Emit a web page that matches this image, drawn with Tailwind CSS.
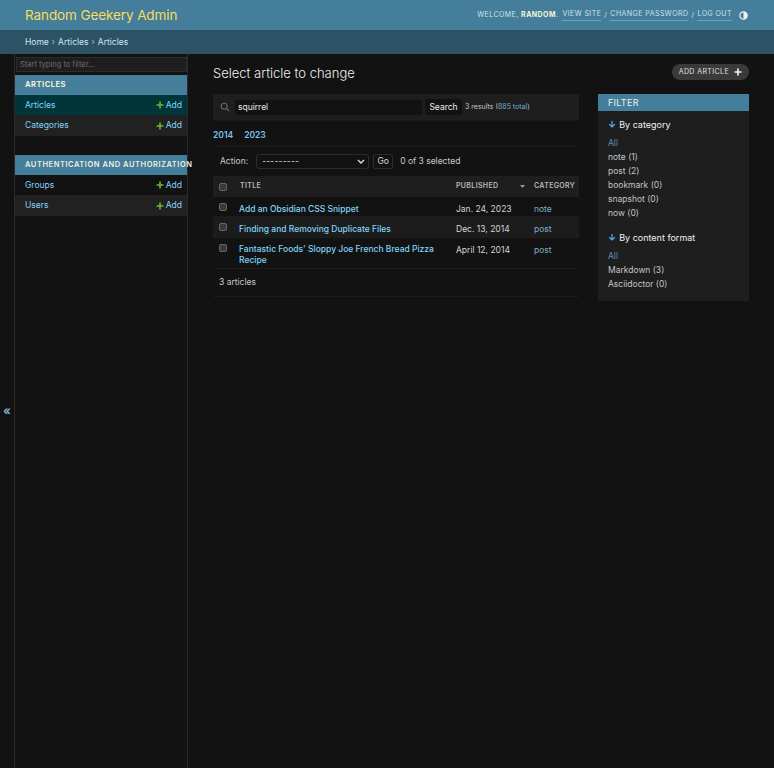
<!DOCTYPE html>
<html lang="en">
<head>
    <meta charset="UTF-8">
    <meta name="viewport" content="width=device-width, initial-scale=1.0">
    <title>Select article to change</title>
    <script src="https://cdn.jsdelivr.net/npm/@tailwindcss/browser@4"></script>
</head>
<body class="bg-[#121212] text-[#dcdcdc] font-['Inter',sans-serif] text-[8.5px] h-[768px] overflow-hidden">

    <!-- Header -->
    <div class="h-[30px] bg-[#447e9b] flex items-center justify-between pl-[25px] pr-[26px]">
        <div class="text-[13.5px] text-[#f5dd5d] tracking-[-0.1px]">Random Geekery Admin</div>
        <div class="flex items-center text-[7px] tracking-[0.45px] text-[#cfe3ea] uppercase">
            <span>Welcome, <b class="text-[#f5f5d5]">random</b>.</span>
            <span class="ml-[4px] border-b border-[#9fc0cf]/50">View site</span>
            <span class="mx-[3px]">/</span>
            <span class="border-b border-[#9fc0cf]/50">Change password</span>
            <span class="mx-[3px]">/</span>
            <span class="border-b border-[#9fc0cf]/50">Log out</span>
            <svg class="ml-[7px]" width="9" height="9" viewBox="0 0 9 9"><circle cx="4.5" cy="4.5" r="3.7" fill="none" stroke="#eee" stroke-width="1.2"/><path d="M4.5 .8a3.7 3.7 0 0 1 0 7.4z" fill="#eee"/></svg>
        </div>
    </div>

    <!-- Breadcrumbs -->
    <div class="h-[24px] bg-[#2c5266] flex items-center pl-[25px] text-[8.5px] text-[#d5e3ea]">
        Home <span class="mx-[3px] text-[#a9c3cf]">›</span> Articles <span class="mx-[3px] text-[#a9c3cf]">›</span> Articles
    </div>

    <div class="flex h-[714px]">
        <!-- Sidebar toggle -->
        <div class="w-[15px] shrink-0 border-r border-[#2a2a2a] flex items-center justify-center pb-[0px]">
            <span class="text-[#79aec8] text-[12px] font-bold leading-none">«</span>
        </div>

        <!-- Sidebar -->
        <div class="w-[173px] shrink-0 border-r border-[#2a2a2a] pt-[3px]">
            <div class="h-[15px] ml-[1px] bg-[#1e1e1e] border border-[#2c2c2c] flex items-center pl-[3px] text-[7.5px] text-[#6f6f6f]">Start typing to filter...</div>

            <div class="mt-[3px] h-[20px] bg-[#447e9b] flex items-center pl-[10px] text-[7.5px] font-bold tracking-[0.5px] text-[#f0f0d8]">ARTICLES</div>
            <div class="h-[20px] bg-[#00363a] flex items-center justify-between pl-[10px] pr-[5px]">
                <span class="text-[#81d4fa]">Articles</span>
                <span class="flex items-center gap-[2px] text-[#81d4fa]"><svg width="8" height="8" viewBox="0 0 8 8"><path d="M4 .5v7M.5 4h7" stroke="#6cb82c" stroke-width="1.6"/></svg>Add</span>
            </div>
            <div class="h-[21px] bg-[#212121] flex items-center justify-between pl-[10px] pr-[5px]">
                <span class="text-[#81d4fa]">Categories</span>
                <span class="flex items-center gap-[2px] text-[#81d4fa]"><svg width="8" height="8" viewBox="0 0 8 8"><path d="M4 .5v7M.5 4h7" stroke="#6cb82c" stroke-width="1.6"/></svg>Add</span>
            </div>

            <div class="mt-[19px] h-[20px] bg-[#447e9b] flex items-center pl-[10px] text-[7.5px] font-semibold tracking-[0.55px] text-[#f0f0e0] whitespace-nowrap">AUTHENTICATION AND AUTHORIZATION</div>
            <div class="h-[20px] bg-[#121212] flex items-center justify-between pl-[10px] pr-[5px]">
                <span class="text-[#81d4fa]">Groups</span>
                <span class="flex items-center gap-[2px] text-[#81d4fa]"><svg width="8" height="8" viewBox="0 0 8 8"><path d="M4 .5v7M.5 4h7" stroke="#6cb82c" stroke-width="1.6"/></svg>Add</span>
            </div>
            <div class="h-[21px] bg-[#212121] flex items-center justify-between pl-[10px] pr-[5px]">
                <span class="text-[#81d4fa]">Users</span>
                <span class="flex items-center gap-[2px] text-[#81d4fa]"><svg width="8" height="8" viewBox="0 0 8 8"><path d="M4 .5v7M.5 4h7" stroke="#6cb82c" stroke-width="1.6"/></svg>Add</span>
            </div>
        </div>

        <!-- Content -->
        <div class="flex-1 min-w-0 pl-[25px] pr-[25px] pt-[10px]">
            <div class="flex items-center justify-between h-[20px] mb-[10px]">
                <h1 class="text-[13px] text-[#f0f0f0] font-light">Select article to change</h1>
                <div class="h-[16px] -mt-[4px] rounded-full bg-[#3a3a3a] flex items-center px-[7px] gap-[5px] text-[7px] tracking-[0.4px] text-[#e0e0e0]">
                    ADD ARTICLE
                    <svg width="8" height="8" viewBox="0 0 8 8"><path d="M4 .5v7M.5 4h7" stroke="#eee" stroke-width="1.7"/></svg>
                </div>
            </div>

            <div class="flex gap-[19px] items-start">
                <!-- List -->
                <div class="w-[366px] shrink-0">
                    <div class="h-[27px] bg-[#1e1e1e] flex items-center pl-[7px] border-b border-[#181818]">
                        <svg width="10" height="10" viewBox="0 0 10 10" fill="none" stroke="#666" stroke-width="1.1"><circle cx="4.2" cy="4.2" r="3"/><path d="M6.5 6.5L9 9"/></svg>
                        <div class="ml-[5px] w-[187px] h-[15px] bg-[#121212] rounded-[2px] flex items-center pl-[3px] text-[#e8e8e8]">squirrel</div>
                        <div class="ml-[3px] h-[16px] w-[37px] bg-[#121212] rounded-[2px] flex items-center justify-center text-[#eeeeee]">Search</div>
                        <div class="ml-[3px] text-[7px] text-[#c8c8c8] whitespace-nowrap">3 results (<span class="text-[#79aec8]">885 total</span>)</div>
                    </div>

                    <div class="h-[23px] flex items-center gap-[11px] text-[#79c4e8] font-semibold border-b border-[#1c1c1c] mt-[3px]">
                        <span>2014</span><span>2023</span>
                    </div>

                    <div class="h-[29px] flex items-center pl-[7px]">
                        <span class="text-[#c8c8c8]">Action:</span>
                        <div class="ml-[8px] w-[113px] h-[15px] border border-[#2c2c2c] rounded-[3px] flex items-center justify-between pl-[5px] pr-[3px] text-[#dddddd]">
                            <span class="tracking-[0.2px]">---------</span>
                            <svg width="8" height="6" viewBox="0 0 8 6" fill="none" stroke="#ddd" stroke-width="1.4"><path d="M1 1l3 3 3-3"/></svg>
                        </div>
                        <div class="ml-[4px] w-[20px] h-[15px] border border-[#2c2c2c] rounded-[2px] flex items-center justify-center text-[#dddddd]">Go</div>
                        <span class="ml-[7px] text-[#c8c8c8]">0 of 3 selected</span>
                    </div>

                    <!-- Table -->
                    <div class="h-[21px] bg-[#1e1e1e] flex items-center text-[7px] tracking-[0.35px] text-[#b8b8b8]">
                        <span class="w-[6px]"></span>
                        <span class="w-[8px] h-[8px] rounded-[2px] bg-[#3a3a3a] border border-[#666]"></span>
                        <span class="ml-[13px] w-[216px] font-semibold">TITLE</span>
                        <span class="w-[64px] font-semibold">PUBLISHED</span>
                        <svg width="5" height="3" viewBox="0 0 5 3" class="mr-[9px]"><path d="M0 0h5L2.5 3z" fill="#999"/></svg>
                        <span class="font-semibold">CATEGORY</span>
                    </div>
                    <div class="h-[20px] flex items-start pt-[6px] border-b border-[#1c1c1c]">
                        <span class="w-[6px]"></span>
                        <span class="w-[8px] h-[8px] rounded-[2px] bg-[#3a3a3a] border border-[#666]"></span>
                        <span class="ml-[12px] w-[217px] text-[#81d4fa] font-medium">Add an Obsidian CSS Snippet</span>
                        <span class="w-[78px] text-[#d5d5d5]">Jan. 24, 2023</span>
                        <span class="text-[#79aec8]">note</span>
                    </div>
                    <div class="h-[21px] bg-[#1c1c1c] flex items-start pt-[6px]">
                        <span class="w-[6px]"></span>
                        <span class="w-[8px] h-[8px] rounded-[2px] bg-[#3a3a3a] border border-[#666]"></span>
                        <span class="ml-[12px] w-[217px] text-[#81d4fa] font-medium">Finding and Removing Duplicate Files</span>
                        <span class="w-[78px] text-[#d5d5d5]">Dec. 13, 2014</span>
                        <span class="text-[#79aec8]">post</span>
                    </div>
                    <div class="h-[31px] flex items-start pt-[6px] border-b border-[#1c1c1c]">
                        <span class="w-[6px]"></span>
                        <span class="w-[8px] h-[8px] rounded-[2px] bg-[#3a3a3a] border border-[#666]"></span>
                        <span class="ml-[12px] w-[217px] pr-[20px] text-[#81d4fa] font-medium leading-[10.5px]">Fantastic Foods' Sloppy Joe French Bread Pizza Recipe</span>
                        <span class="w-[78px] text-[#d5d5d5]">April 12, 2014</span>
                        <span class="text-[#79aec8]">post</span>
                    </div>
                    <div class="h-[28px] flex items-center pl-[6px] text-[#c8c8c8] border-b border-[#1c1c1c]">3 articles</div>
                </div>

                <!-- Filter -->
                <div class="w-[151px] shrink-0 h-[207px] bg-[#1e1e1e]">
                    <div class="h-[17px] bg-[#447e9b] flex items-center pl-[10px] text-[9px] tracking-[0.3px] text-[#f0f0f0]">FILTER</div>
                    <div class="pl-[10px] pt-[7px]">
                        <div class="h-[13px] flex items-center text-[9px] text-[#eeeeee] gap-[3px]"><span class="text-[#5fb0e0] font-bold">↓</span>By category</div>
                        <ul class="mt-[5px] leading-[14px] text-[#c4c4c4]">
                            <li class="text-[#5f8fb0]">All</li>
                            <li>note (1)</li>
                            <li>post (2)</li>
                            <li>bookmark (0)</li>
                            <li>snapshot (0)</li>
                            <li>now (0)</li>
                        </ul>
                        <div class="mt-[11px] h-[13px] flex items-center text-[9px] text-[#eeeeee] gap-[3px]"><span class="text-[#5fb0e0] font-bold">↓</span>By content format</div>
                        <ul class="mt-[5px] leading-[14px] text-[#c4c4c4]">
                            <li class="text-[#5f8fb0]">All</li>
                            <li>Markdown (3)</li>
                            <li>Asciidoctor (0)</li>
                        </ul>
                    </div>
                </div>
            </div>
        </div>
    </div>
</body>
</html>
